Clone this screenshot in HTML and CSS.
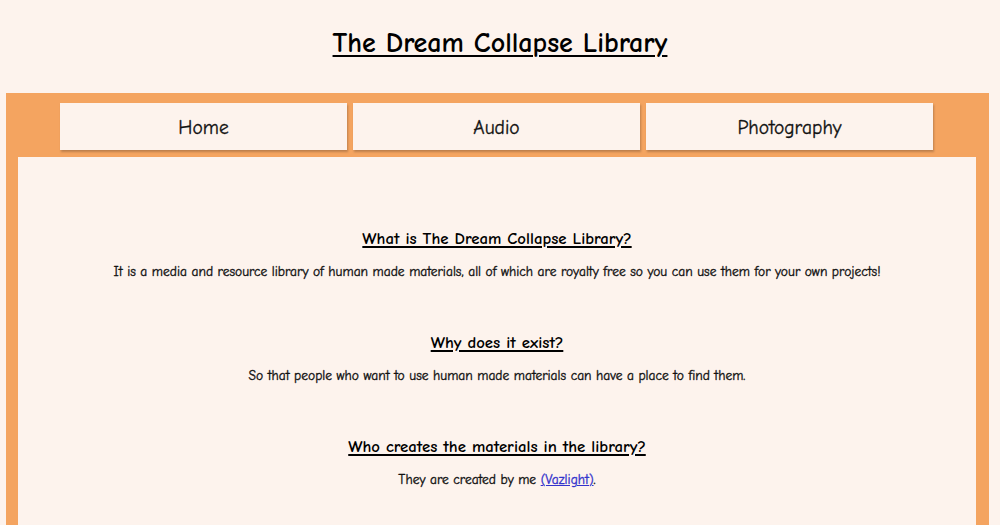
FILE: index.html
```html
<!DOCTYPE html>
<html lang="en">
<head>
<meta charset="utf-8">
<title>The Dream Collapse Library</title>
<link rel="stylesheet" href="styles.css">
</head>
<body>
<header class="site-header">
  <h1 class="site-title">The Dream Collapse Library</h1>
</header>
<div class="frame">
  <nav class="nav">
    <a class="nav-btn" href="#">Home</a>
    <a class="nav-btn" href="#">Audio</a>
    <a class="nav-btn" href="#">Photography</a>
  </nav>
  <main class="content">
    <section class="block">
      <h2 class="block-title">What is The Dream Collapse Library?</h2>
      <p class="block-text">It is a media and resource library of human made materials, all of which are royalty free so you can use them for your own projects!</p>
    </section>
    <section class="block">
      <h2 class="block-title">Why does it exist?</h2>
      <p class="block-text">So that people who want to use human made materials can have a place to find them.</p>
    </section>
    <section class="block">
      <h2 class="block-title">Who creates the materials in the library?</h2>
      <p class="block-text">They are created by me <a class="link" href="#">(Vazlight)</a>.</p>
    </section>
  </main>
</div>
</body>
</html>
```
FILE: styles.css
```css
html, body {
  margin: 0;
  padding: 0;
}
body {
  background: #fdf3ed;
  font-family: "Comic Sans MS", "Comic Neue", "Open Sans", sans-serif;
  color: #111;
  height: 525px;
  overflow: hidden;
}
.site-header {
  height: 93px;
  display: flex;
  justify-content: center;
}
.site-title {
  margin: 26px 0 0;
  font-size: 28px;
  line-height: 34px;
  font-weight: 700;
  color: #000;
  text-decoration: underline;
  text-decoration-thickness: 2px;
  text-underline-offset: 3px;
}
.frame {
  margin: 0 11px 0 6px;
  background: #f4a460;
  padding: 10px 13px 0 12px;
  height: 432px;
  box-sizing: border-box;
}
.nav {
  display: flex;
  justify-content: center;
  gap: 6px;
  height: 47px;
  margin-bottom: 7px;
  padding-right: 1px;
}
.nav-btn {
  width: 287px;
  background: #fdf3ed;
  color: #111;
  text-decoration: none;
  display: flex;
  align-items: center;
  justify-content: center;
  padding-top: 2px;
  box-sizing: border-box;
  font-size: 19.5px;
  -webkit-text-stroke: 0.3px #111;
  box-shadow: 1px 2px 2px rgba(90, 60, 40, 0.35);
}
.content {
  background: #fdf3ed;
  height: 368px;
  padding-top: 71px;
  box-sizing: border-box;
}
.block {
  text-align: center;
  height: 104px;
}
.block-title {
  margin: 0;
  font-size: 16.8px;
  line-height: 22px;
  font-weight: 700;
  color: #000;
  text-decoration: underline;
  text-decoration-thickness: 1.5px;
  text-underline-offset: 2px;
}
.block-text {
  margin: 13px 0 0;
  font-size: 13.5px;
  line-height: 18px;
  color: #111;
  -webkit-text-stroke: 0.35px #111;
}
.link {
  color: #3333cc;
  -webkit-text-stroke: 0.35px #3333cc;
}
```
